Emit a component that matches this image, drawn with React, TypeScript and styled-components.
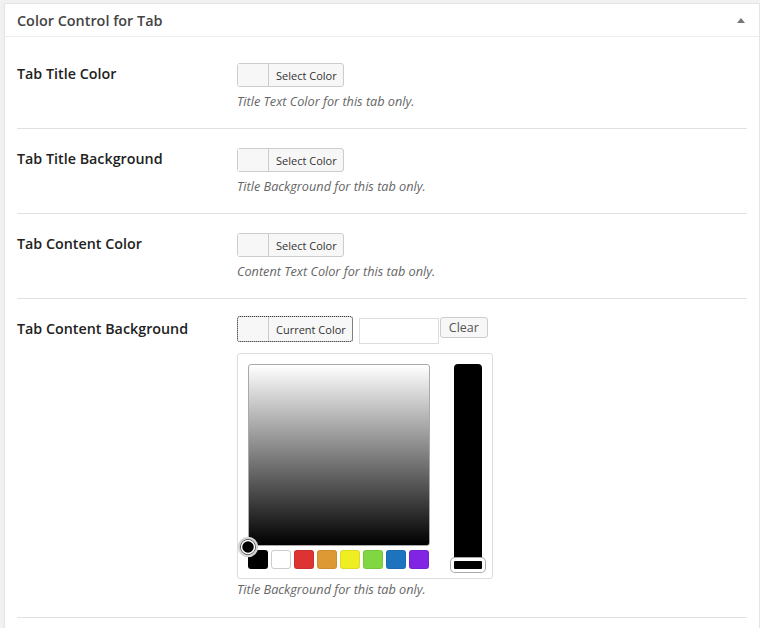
import React from 'react';
import styled, { createGlobalStyle } from 'styled-components';

const GlobalStyle = createGlobalStyle`
  body {
    margin: 0;
    padding: 3px 0 0 4px;
    background: #f1f1f1;
    font-family: "Open Sans", "Liberation Sans", sans-serif;
    color: #444;
  }
`;

const Box = styled.div`
  width: 754px;
  background: #fff;
  border: 1px solid #e5e5e5;
  border-bottom: none;
  height: 640px;
  box-shadow: 0 1px 1px rgba(0, 0, 0, 0.04);
`;

const Header = styled.div`
  display: flex;
  align-items: center;
  justify-content: space-between;
  height: 32px;
  padding: 0 12px;
  border-bottom: 1px solid #eee;
`;

const HeaderTitle = styled.h3`
  margin: 0;
  font-size: 14.4px;
  font-weight: 600;
  color: #444;
`;

const Toggle = styled.span`
  width: 0;
  height: 0;
  margin-right: 2px;
  border-left: 4px solid transparent;
  border-right: 4px solid transparent;
  border-bottom: 5px solid #777;
`;

const Inside = styled.div`
  padding: 7px 12px 0;
`;

const Row = styled.div`
  display: flex;
  padding: 19px 0 18px;
  border-bottom: 1px solid #e1e1e1;
`;

const Label = styled.div`
  width: 220px;
  flex: none;
  font-size: 14.3px;
  font-weight: 600;
  color: #222;
  line-height: 22px;
`;

const Field = styled.div`
  display: flex;
  flex-direction: column;
  align-items: flex-start;
`;

const Controls = styled.div`
  display: flex;
  align-items: flex-start;
  gap: 6px;
  margin-top: -2px;
`;

const ColorButton = styled.div<{ $focus?: boolean }>`
  display: flex;
  height: ${(p) => (p.$focus ? '26px' : '24px')};
  box-sizing: border-box;
  border: 1px solid #ccc;
  border-radius: 3px;
  background: #f7f7f7;
  outline: ${(p) => (p.$focus ? '1px dotted #333' : 'none')};
  outline-offset: -1px;
`;

const Swatch = styled.span`
  width: 30px;
  border-right: 1px solid #ccc;
  background: #f7f7f7;
`;

const ButtonText = styled.span`
  display: flex;
  align-items: center;
  padding: 0 6px 0 7px;
  font-size: 11px;
  color: #333;
`;

const HexInput = styled.div`
  width: 80px;
  height: 26px;
  margin-top: 2px;
  box-sizing: border-box;
  border: 1px solid #ddd;
  background: #fff;
`;

const ClearButton = styled.div`
  height: 21px;
  margin-top: 1px;
  margin-left: -5px;
  padding: 0 8px;
  box-sizing: border-box;
  border: 1px solid #ccc;
  border-radius: 3px;
  background: #f7f7f7;
  font-size: 12.5px;
  line-height: 19px;
  color: #555;
`;

const Description = styled.p<{ $tight?: boolean }>`
  margin: ${(p) => (p.$tight ? '1px 0 1px' : '5px 0 0')};
  font-size: 12.7px;
  font-style: italic;
  line-height: 18px;
  color: #666;
`;

const Picker = styled.div`
  display: flex;
  gap: 24px;
  width: 256px;
  height: 226px;
  margin-top: 9px;
  box-sizing: border-box;
  padding: 10px 10px 0;
  border: 1px solid #ddd;
  border-radius: 3px;
  background: #fff;
`;

const Square = styled.div`
  position: relative;
  width: 182px;
  display: flex;
  flex-direction: column;
  gap: 4px;
`;

const Gradient = styled.div`
  height: 182px;
  box-sizing: border-box;
  border: 1px solid #aaa;
  border-radius: 3px;
  background: linear-gradient(to bottom, #fff, #000);
`;

const Palette = styled.div`
  display: flex;
  gap: 3px;
`;

const PaletteChip = styled.span<{ $color: string }>`
  width: 20px;
  height: 19px;
  box-sizing: border-box;
  border-radius: 3px;
  background: ${(p) => p.$color};
  border: 1px solid ${(p) => (p.$color === '#fff' ? '#ccc' : 'rgba(0,0,0,0.08)')};
`;

const Handle = styled.svg`
  position: absolute;
  left: -11px;
  top: 172px;
`;

const Strip = styled.div`
  position: relative;
  width: 28px;
  height: 204px;
  border-radius: 4px;
  background: #000;
`;

const StripHandle = styled.span`
  position: absolute;
  left: -3px;
  bottom: -4px;
  width: 34px;
  height: 14px;
  box-sizing: border-box;
  border: 3px solid #fff;
  border-radius: 4px;
  background: #000;
  box-shadow: 0 0 0 1px #aaa;
`;

const palette = ['#000', '#fff', '#dd3333', '#dd9933', '#eeee22', '#81d742', '#1e73be', '#8224e3'];

const simpleRows = [
  { label: 'Tab Title Color', desc: 'Title Text Color for this tab only.' },
  { label: 'Tab Title Background', desc: 'Title Background for this tab only.' },
  { label: 'Tab Content Color', desc: 'Content Text Color for this tab only.' },
];

const App = () => (
  <>
    <GlobalStyle />
    <Box>
      <Header>
        <HeaderTitle>Color Control for Tab</HeaderTitle>
        <Toggle />
      </Header>
      <Inside>
        {simpleRows.map((r) => (
          <Row key={r.label}>
            <Label>{r.label}</Label>
            <Field>
              <ColorButton>
                <Swatch />
                <ButtonText>Select Color</ButtonText>
              </ColorButton>
              <Description>{r.desc}</Description>
            </Field>
          </Row>
        ))}
        <Row>
          <Label>Tab Content Background</Label>
          <Field>
            <Controls>
              <ColorButton $focus>
                <Swatch />
                <ButtonText>Current Color</ButtonText>
              </ColorButton>
              <HexInput />
              <ClearButton>Clear</ClearButton>
            </Controls>
            <Picker>
              <Square>
                <Gradient />
                <Palette>
                  {palette.map((c) => (
                    <PaletteChip key={c} $color={c} />
                  ))}
                </Palette>
                <Handle width="22" height="22" viewBox="0 0 22 22">
                  <circle cx="11" cy="11" r="9" fill="#000" stroke="#d4d4d4" strokeWidth="2.5" />
                  <circle cx="11" cy="11" r="6.5" fill="none" stroke="#fff" strokeWidth="1.5" />
                </Handle>
              </Square>
              <Strip>
                <StripHandle />
              </Strip>
            </Picker>
            <Description $tight>Title Background for this tab only.</Description>
          </Field>
        </Row>
      </Inside>
    </Box>
  </>
);

export default App;
